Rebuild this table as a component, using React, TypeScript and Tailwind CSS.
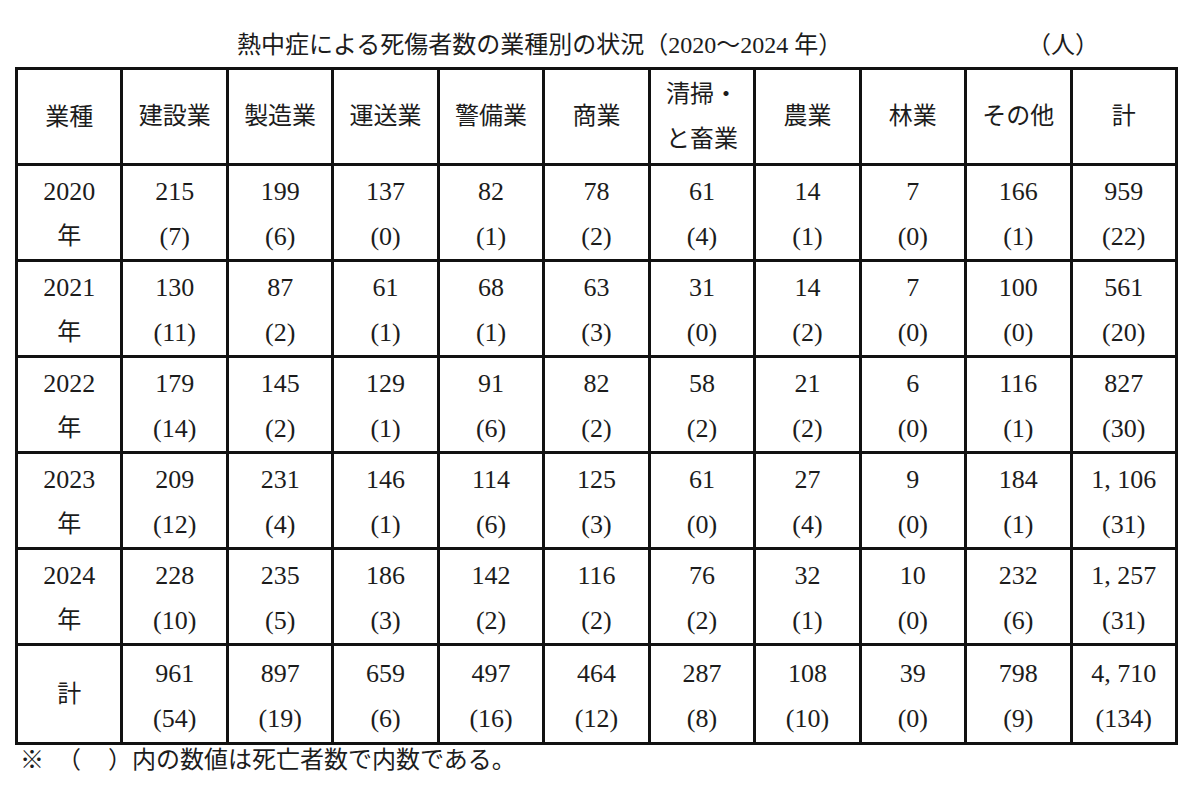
import React from "react";

type Row = { year: string; values: [string, string][] };

const headers = ["建設業", "製造業", "運送業", "警備業", "商業", "清掃・\nと畜業", "農業", "林業", "その他", "計"];

const rows: Row[] = [
  {
    year: "2020",
    values: [["215", "7"], ["199", "6"], ["137", "0"], ["82", "1"], ["78", "2"], ["61", "4"], ["14", "1"], ["7", "0"], ["166", "1"], ["959", "22"]],
  },
  {
    year: "2021",
    values: [["130", "11"], ["87", "2"], ["61", "1"], ["68", "1"], ["63", "3"], ["31", "0"], ["14", "2"], ["7", "0"], ["100", "0"], ["561", "20"]],
  },
  {
    year: "2022",
    values: [["179", "14"], ["145", "2"], ["129", "1"], ["91", "6"], ["82", "2"], ["58", "2"], ["21", "2"], ["6", "0"], ["116", "1"], ["827", "30"]],
  },
  {
    year: "2023",
    values: [["209", "12"], ["231", "4"], ["146", "1"], ["114", "6"], ["125", "3"], ["61", "0"], ["27", "4"], ["9", "0"], ["184", "1"], ["1, 106", "31"]],
  },
  {
    year: "2024",
    values: [["228", "10"], ["235", "5"], ["186", "3"], ["142", "2"], ["116", "2"], ["76", "2"], ["32", "1"], ["10", "0"], ["232", "6"], ["1, 257", "31"]],
  },
];

const totals: [string, string][] = [
  ["961", "54"], ["897", "19"], ["659", "6"], ["497", "16"], ["464", "12"], ["287", "8"], ["108", "10"], ["39", "0"], ["798", "9"], ["4, 710", "134"],
];

const cell = "border-[3px] border-[#111] text-center align-middle p-0";

// two stacked lines inside a data cell
const Pair = ({ top, bottom, kanji }: { top: string; bottom: string; kanji?: boolean }) => (
  <div className="flex flex-col items-center pt-[3px] text-[26px]">
    <span className="leading-[45px]">{top}</span>
    <span className={kanji ? "leading-[45px] text-[24px]" : "leading-[45px]"}>{bottom}</span>
  </div>
);

const App = () => {
  return (
    <div
      className="w-[1200px] h-[798px] bg-white pt-[30px] pl-[15px] text-[#1c1c1c] text-[24px]"
      style={{ fontFamily: '"Liberation Serif", "Noto Sans CJK JP", serif' }}
    >
      <div className="flex items-center h-[30px] w-[1164px] leading-[30px]">
        <span className="ml-[222px]">熱中症による死傷者数の業種別の状況（2020～2024 年）</span>
        <span className="ml-auto mr-[80px]">（人）</span>
      </div>

      <table className="mt-[7px] w-[1163px] table-fixed border-collapse">
        <tbody>
          <tr className="h-[96px]">
            <td className={cell}>業種</td>
            {headers.map((h) => (
              <td key={h} className={cell}>
                {h.split("\n").map((line) => (
                  <div key={line} className="leading-[45px]">
                    {line}
                  </div>
                ))}
              </td>
            ))}
          </tr>
          {rows.map((r) => (
            <tr key={r.year} className="h-[96px]">
              <td className={cell}>
                <Pair top={r.year} bottom="年" kanji />
              </td>
              {r.values.map(([a, b], i) => (
                <td key={i} className={cell}>
                  <Pair top={a} bottom={`(${b})`} />
                </td>
              ))}
            </tr>
          ))}
          <tr className="h-[99px]">
            <td className={cell}>計</td>
            {totals.map(([a, b], i) => (
              <td key={i} className={cell}>
                <Pair top={a} bottom={`(${b})`} />
              </td>
            ))}
          </tr>
        </tbody>
      </table>

      <p className="flex pl-[5px] text-[24px] leading-[30px]">
        <span>※</span>
        <span className="ml-[13px]">（</span>
        <span className="ml-[27px]">）</span>
        <span>内の数値は死亡者数で内数である。</span>
      </p>
    </div>
  );
};

export default App;
